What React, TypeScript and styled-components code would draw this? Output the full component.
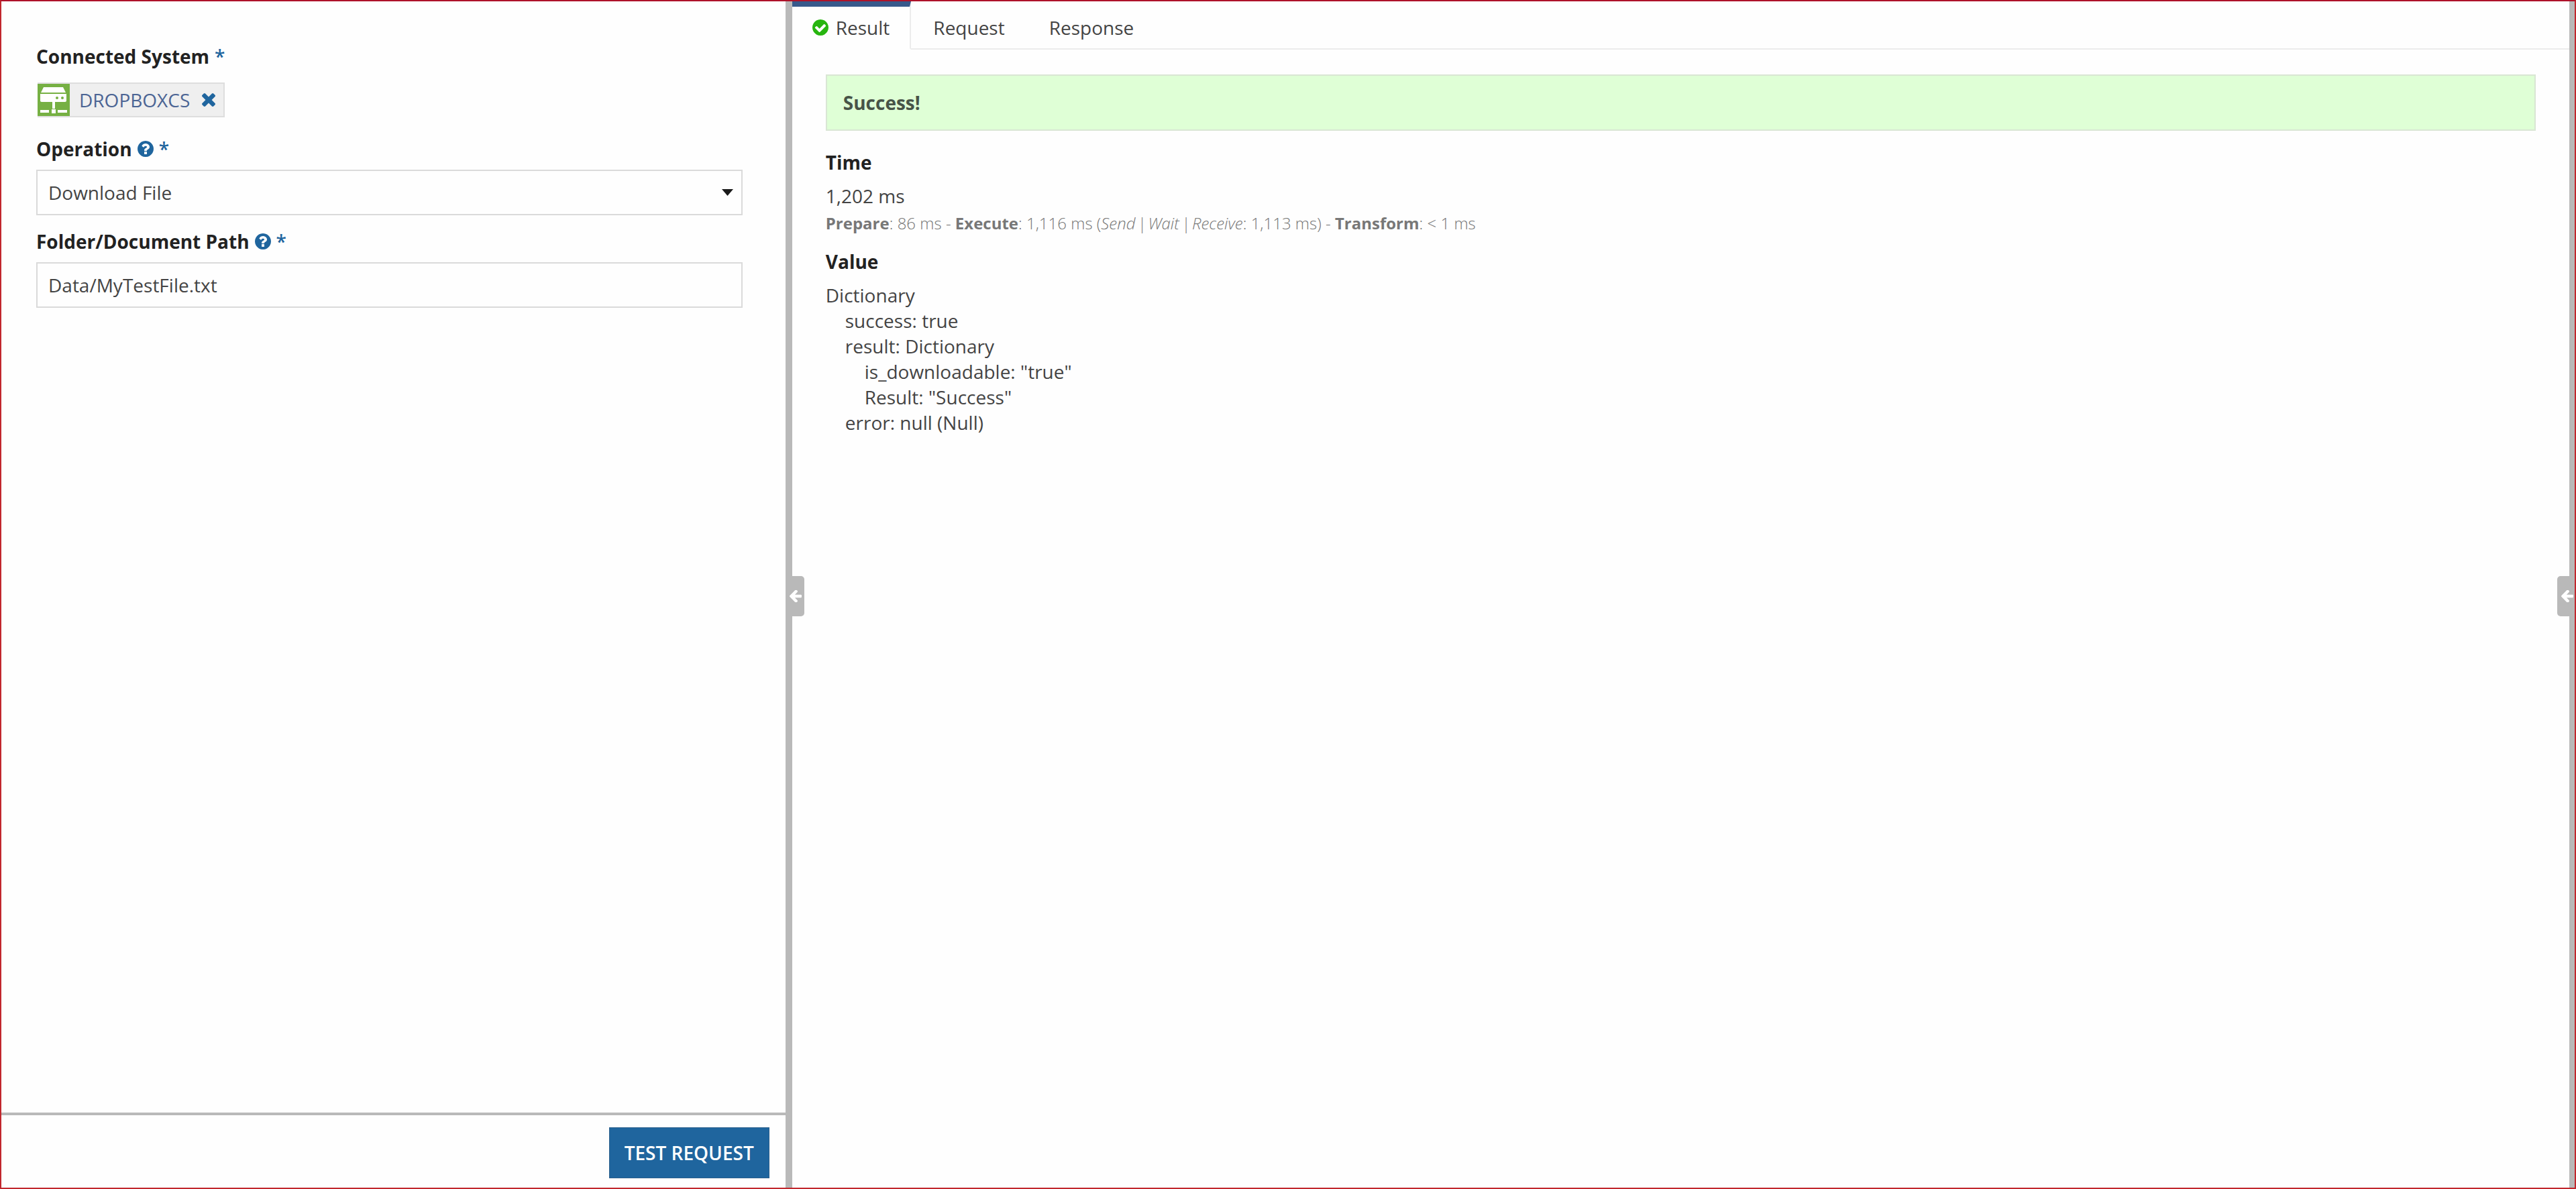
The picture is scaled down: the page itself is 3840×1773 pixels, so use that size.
import React, { useState } from "react";
import styled, { createGlobalStyle, css } from "styled-components";

const color = {
  frame: "#c1272d",
  frameTop: "#ae1229",
  rail: "#b9b9b9",
  line: "#dadada",
  tabLine: "#ececec",
  accent: "#1f659e",
  tabBar: "#38598b",
  ink: "#222222",
  text: "#444444",
  muted: "#777777",
  ok: "#27b50f",
};

const GlobalStyle = createGlobalStyle`
  *, *::before, *::after { box-sizing: border-box; }
  body { margin: 0; }
  body, button, input, select {
    font-family: "Open Sans", "Noto Sans", sans-serif;
    font-size: 28px;
    line-height: 38px;
    color: ${color.text};
  }
`;

const Frame = styled.div`
  display: grid;
  grid-template-columns: minmax(0, 15fr) 10px minmax(0, 34fr) 8px;
  min-height: 100vh;
  overflow: hidden;
  background: #fefefe;
  border: 2px solid ${color.frame};
  border-top-color: ${color.frameTop};
`;

const Side = styled.section`
  display: flex;
  flex-direction: column;
`;

const Form = styled.form`
  flex: 1;
  display: flex;
  flex-direction: column;
  gap: 20px;
  padding: 63px 64px 20px 52px;
`;

const Field = styled.div`
  display: flex;
  flex-direction: column;
  gap: 12px;
`;

const LabelRow = styled.div`
  display: flex;
  align-items: center;
  gap: 8px;
`;

const labelText = css`
  font-weight: 700;
  color: ${color.ink};
`;

const Label = styled.label`
  ${labelText}
`;

const GroupLabel = styled.span`
  ${labelText}
`;

const Required = styled.span`
  font-weight: 600;
  color: ${color.accent};
`;

const IconButton = styled.button`
  display: flex;
  padding: 0;
  border: 0;
  background: none;
  color: ${color.accent};
  cursor: pointer;
`;

const Glyph = styled.svg<{ $size: number }>`
  display: block;
  flex: none;
  width: ${(p) => p.$size}px;
  height: ${(p) => p.$size}px;
  fill: currentColor;
`;

const Chip = styled.div`
  align-self: flex-start;
  display: flex;
  align-items: center;
  height: 52px;
  margin: 8px 2px;
  padding-right: 12px;
  border: 2px solid #dedede;
  border-left-width: 0;
  background: #efefef;
`;

const ChipIcon = styled.svg`
  display: block;
  width: 48px;
  height: 48px;
  margin-right: 14px;
`;

const ChipLink = styled.a`
  margin-right: 18px;
  color: #4c6594;
  text-decoration: none;
`;

const control = css`
  width: 100%;
  height: 68px;
  padding: 0 16px;
  border: 2px solid ${color.line};
  border-radius: 0;
  background: #fefefe;
  outline: none;
`;

const TextInput = styled.input`
  ${control}
`;

const SelectBox = styled.div`
  position: relative;
`;

const Select = styled.select`
  ${control}
  appearance: none;
`;

const Caret = styled.svg`
  position: absolute;
  right: 14px;
  top: 29px;
  width: 17px;
  height: 10px;
  pointer-events: none;
`;

const Footer = styled.footer`
  display: flex;
  justify-content: flex-end;
  padding: 18px 24px 14px;
  border-top: 4px solid ${color.rail};
`;

const PrimaryButton = styled.button`
  height: 76px;
  padding: 0 22px;
  border: 1px solid #2a5f8c;
  background: ${color.accent};
  color: #ffffff;
  font-weight: 600;
  cursor: pointer;
`;

const Rail = styled.div`
  position: relative;
  background: ${color.rail};
`;

const RailHandle = styled.button<{ $edge: "left" | "right" }>`
  position: absolute;
  top: calc(50% - 28px);
  ${(p) => (p.$edge === "left" ? "left: 0;" : "right: -2px;")}
  display: flex;
  align-items: center;
  width: 28px;
  height: 60px;
  padding: 0 0 0 6px;
  border: 0;
  border-radius: ${(p) => (p.$edge === "left" ? "0 5px 5px 0" : "5px 0 0 5px")};
  background: ${color.rail};
  color: #ffffff;
  cursor: pointer;
`;

const Main = styled.main`
  min-width: 0;
`;

const TabBar = styled.div`
  display: flex;
`;

const Tab = styled.button<{ $active: boolean }>`
  display: flex;
  align-items: center;
  gap: 11px;
  padding: 12px ${(p) => (p.$active ? 30 : 33)}px;
  border: 0 solid ${color.tabLine};
  border-top: 8px solid ${(p) => (p.$active ? color.tabBar : "transparent")};
  border-right-width: ${(p) => (p.$active ? 2 : 0)}px;
  border-bottom: 2px solid ${(p) => (p.$active ? "transparent" : color.tabLine)};
  background: none;
  cursor: pointer;
`;

const TabRest = styled.div`
  flex: 1;
  border-bottom: 2px solid ${color.tabLine};
`;

const Panel = styled.div`
  padding: 37px 50px;
`;

const Banner = styled.p`
  margin: 0 0 28px;
  padding: 21px 24px;
  border: 2px solid #d9e6d4;
  background: #dfffd6;
  color: #475447;
  font-weight: 700;
`;

const Heading = styled.h2`
  margin: 0 0 12px;
  font-size: 28px;
  font-weight: 700;
  color: ${color.ink};
`;

const Total = styled.p`
  margin: 0 0 4px;
`;

const Breakdown = styled.p`
  margin: 0 0 20px;
  font-size: 24px;
  line-height: 36px;
  font-weight: 300;
  color: ${color.muted};

  b {
    font-weight: 700;
  }
`;

const Bar = styled.span`
  padding: 0 3px;
`;

const Tree = styled.ul<{ $nested?: boolean }>`
  margin: 0;
  padding: 0 0 0 ${(p) => (p.$nested ? 29 : 0)}px;
  list-style: none;
`;

const ICONS = {
  help: {
    box: "128 128 1536 1536",
    d: "M1024 1376v-192q0-14-9-23t-23-9h-192q-14 0-23 9t-9 23v192q0 14 9 23t23 9h192q14 0 23-9t9-23zm256-672q0-88-55.5-163t-138.5-116-170-41q-243 0-371 213-15 24 8 42l132 100q7 6 19 6 16 0 25-12 53-68 86-92 34-24 86-24 48 0 85.5 26t37.5 59q0 38-20 61t-68 45q-63 28-115.5 86.5t-52.5 125.5v36q0 14 9 23t23 9h192q14 0 23-9t9-23q0-19 21.5-49.5t54.5-49.5q32-18 49-28.5t46-35 44.5-48 28-60.5 12.5-81zm384 192q0 209-103 385.5t-279.5 279.5-385.5 103-385.5-103-279.5-279.5-103-385.5 103-385.5 279.5-279.5 385.5-103 385.5 103 279.5 279.5 103 385.5z",
  },
  check: {
    box: "128 128 1536 1536",
    d: "M1412 734q0-28-18-46l-91-90q-19-19-45-19t-45 19l-408 407-226-226q-19-19-45-19t-45 19l-91 90q-18 18-18 46 0 27 18 45l362 362q19 19 45 19 27 0 46-19l543-543q18-18 18-45zm252 162q0 209-103 385.5t-279.5 279.5-385.5 103-385.5-103-279.5-279.5-103-385.5 103-385.5 279.5-279.5 385.5-103 385.5 103 279.5 279.5 103 385.5z",
  },
  times: {
    box: "302 366 1188 1188",
    d: "M1490 1322q0 40-28 68l-136 136q-28 28-68 28t-68-28l-294-294-294 294q-28 28-68 28t-68-28l-136-136q-28-28-28-68t28-68l294-294-294-294q-28-28-28-68t28-68l136-136q28-28 68-28t68 28l294 294 294-294q28-28 68-28t68 28l136 136q28 28 28 68t-28 68l-294 294 294 294q28 28 28 68z",
  },
  arrow: {
    box: "192 224 1472 1472",
    d: "M1664 896v128q0 53-32.5 90.5t-84.5 37.5h-704l293 294q38 36 38 90t-38 90l-75 76q-37 37-90 37-52 0-91-37l-651-652q-37-37-37-90 0-52 37-91l651-650q38-38 91-38 52 0 90 38l75 74q38 38 38 91t-38 91l-293 293h704q52 0 84.5 37.5t32.5 90.5z",
  },
};

function Icon({ name, size, fill }: { name: keyof typeof ICONS; size: number; fill?: string }) {
  return (
    <Glyph $size={size} viewBox={ICONS[name].box} color={fill} aria-hidden="true">
      <path d={ICONS[name].d} />
    </Glyph>
  );
}

function ServerIcon() {
  return (
    <ChipIcon viewBox="0 0 48 48" aria-hidden="true">
      <rect width="48" height="48" fill="#76b043" />
      <path d="M9 5h29l4 8H5z" fill="#fff" />
      <path d="M4 15h39v10q0 2-2 2H6q-2 0-2-2z" fill="#fff" />
      <circle cx="29" cy="21" r="2" fill="#76b043" />
      <circle cx="37" cy="21" r="2" fill="#76b043" />
      <path d="M22 27h4v10h-4zM21 38h6v6h-6zM4 39h13v4H4zM30 39h14v4H30z" fill="#fff" />
    </ChipIcon>
  );
}

type Node = { text: string; children?: Node[] };

const VALUE: Node[] = [
  {
    text: "Dictionary",
    children: [
      { text: "success: true" },
      {
        text: "result: Dictionary",
        children: [{ text: 'is_downloadable: "true"' }, { text: 'Result: "Success"' }],
      },
      { text: "error: null (Null)" },
    ],
  },
];

function ValueTree({ nodes, nested }: { nodes: Node[]; nested?: boolean }) {
  return (
    <Tree $nested={nested}>
      {nodes.map((n) => (
        <li key={n.text}>
          {n.text}
          {n.children && <ValueTree nodes={n.children} nested />}
        </li>
      ))}
    </Tree>
  );
}

const TABS = ["Result", "Request", "Response"];

export default function App() {
  const [tab, setTab] = useState("Result");
  const [path, setPath] = useState("Data/MyTestFile.txt");

  return (
    <>
      <GlobalStyle />
      <Frame>
        <Side>
          <Form id="request-form" onSubmit={(e) => e.preventDefault()}>
            <Field role="group" aria-labelledby="system-label">
              <LabelRow>
                <GroupLabel id="system-label">Connected System</GroupLabel>
                <Required>*</Required>
              </LabelRow>
              <Chip>
                <ServerIcon />
                <ChipLink href="#system">DROPBOXCS</ChipLink>
                <IconButton type="button" aria-label="Remove DROPBOXCS">
                  <Icon name="times" size={20} />
                </IconButton>
              </Chip>
            </Field>
            <Field>
              <LabelRow>
                <Label htmlFor="operation">Operation</Label>
                <IconButton type="button" aria-label="Help on Operation">
                  <Icon name="help" size={24} />
                </IconButton>
                <Required>*</Required>
              </LabelRow>
              <SelectBox>
                <Select id="operation">
                  <option>Download File</option>
                </Select>
                <Caret viewBox="0 0 17 10" aria-hidden="true">
                  <path d="M0 0h17L8.500 10z" fill="#1a1a1a" />
                </Caret>
              </SelectBox>
            </Field>
            <Field>
              <LabelRow>
                <Label htmlFor="path">Folder/Document Path</Label>
                <IconButton type="button" aria-label="Help on Folder/Document Path">
                  <Icon name="help" size={24} />
                </IconButton>
                <Required>*</Required>
              </LabelRow>
              <TextInput id="path" value={path} onChange={(e) => setPath(e.target.value)} />
            </Field>
          </Form>
          <Footer>
            <PrimaryButton type="submit" form="request-form">
              TEST REQUEST
            </PrimaryButton>
          </Footer>
        </Side>
        <Rail>
          <RailHandle $edge="left" type="button" aria-label="Collapse request pane">
            <Icon name="arrow" size={18} />
          </RailHandle>
        </Rail>
        <Main>
          <TabBar role="tablist">
            {TABS.map((name) => (
              <Tab
                key={name}
                type="button"
                role="tab"
                aria-selected={tab === name}
                $active={tab === name}
                onClick={() => setTab(name)}
              >
                {name === "Result" && <Icon name="check" size={24} fill={color.ok} />}
                {name}
              </Tab>
            ))}
            <TabRest />
          </TabBar>
          <Panel role="tabpanel">
            <Banner role="status">Success!</Banner>
            <Heading>Time</Heading>
            <Total>1,202 ms</Total>
            <Breakdown>
              <b>Prepare</b>: 86 ms - <b>Execute</b>: 1,116 ms (
              <i>
                Send<Bar>|</Bar>Wait<Bar>|</Bar>Receive
              </i>
              : 1,113 ms) - <b>Transform</b>: &lt; 1 ms
            </Breakdown>
            <Heading>Value</Heading>
            <ValueTree nodes={VALUE} />
          </Panel>
        </Main>
        <Rail>
          <RailHandle $edge="right" type="button" aria-label="Expand side pane">
            <Icon name="arrow" size={18} />
          </RailHandle>
        </Rail>
      </Frame>
    </>
  );
}
